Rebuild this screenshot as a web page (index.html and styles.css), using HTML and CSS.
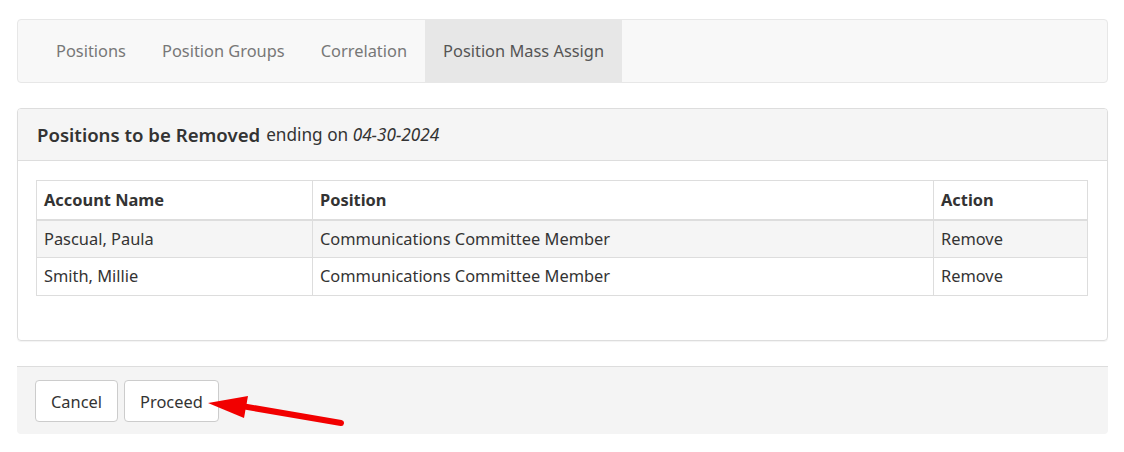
FILE: index.html
```html
<!DOCTYPE html>
<html>
<head>
<meta charset="utf-8">
<link rel="stylesheet" href="styles.css">
</head>
<body>
<div class="page">
  <nav class="navbar">
    <a class="tab">Positions</a>
    <a class="tab">Position Groups</a>
    <a class="tab">Correlation</a>
    <a class="tab active">Position Mass Assign</a>
  </nav>

  <div class="panel">
    <div class="panel-heading"><strong>Positions to be Removed</strong> <span class="sub">ending on <em>04-30-2024</em></span></div>
    <div class="panel-body">
      <table class="grid">
        <colgroup><col class="c1"><col class="c2"><col class="c3"></colgroup>
        <thead>
          <tr><th>Account Name</th><th>Position</th><th>Action</th></tr>
        </thead>
        <tbody>
          <tr class="odd"><td>Pascual, Paula</td><td>Communications Committee Member</td><td>Remove</td></tr>
          <tr><td>Smith, Millie</td><td>Communications Committee Member</td><td>Remove</td></tr>
        </tbody>
      </table>
    </div>
  </div>

  <div class="footer">
    <button class="btn">Cancel</button>
    <button class="btn">Proceed</button>
  </div>
</div>
<svg class="arrow" width="1124" height="452" viewBox="0 0 1124 452">
  <line x1="341" y1="423" x2="236" y2="405" stroke="#f20000" stroke-width="6" stroke-linecap="round"/>
  <polygon points="208,403 248,396 244,418" fill="#f20000"/>
</svg>
</body>
</html>
```

FILE: styles.css
```css
* { box-sizing: border-box; }
html, body { margin: 0; background: #fff; }
body {
  font-family: "Noto Sans", "Open Sans", sans-serif;
  font-size: 16.4px;
  color: #333;
  position: relative;
}
.page { padding: 19px 16px 0 17px; }

.navbar {
  display: flex;
  height: 64px;
  background: #f8f8f8;
  border: 1px solid #e7e7e7;
  border-radius: 4px;
  padding-left: 20px;
  margin-bottom: 25px;
}
.tab {
  display: flex;
  align-items: center;
  padding: 0 18px;
  color: #777;
  font-size: 16.4px;
  line-height: 1;
}
.tab.active { background: #e7e7e7; color: #555; }

.panel {
  border: 1px solid #ddd;
  border-radius: 4px;
  box-shadow: 0 1px 1px rgba(0,0,0,.05);
  margin-bottom: 25px;
}
.panel-heading {
  height: 52px;
  display: flex;
  align-items: center;
  padding: 0 19px;
  background: #f5f5f5;
  border-bottom: 1px solid #ddd;
  border-radius: 3px 3px 0 0;
  font-size: 18.6px;
  color: #333;
}
.panel-heading strong { font-weight: 600; margin-right: 6px; }
.panel-heading .sub { font-size: 17.2px; }
.panel-body { padding: 19px 19px 44px 18px; }

.grid {
  width: 100%;
  border-collapse: collapse;
  border: 1px solid #ddd;
}
.c1 { width: 276px; }
.c3 { width: 154px; }
.grid th, .grid td {
  border: 1px solid #ddd;
  text-align: left;
  padding: 0 7px;
  height: 38px;
  line-height: 1;
}
.grid th { font-weight: 700; border-bottom: 2px solid #ddd; height: 39px; }
.grid tr.odd td { background: #f5f5f5; }

.footer {
  background: #f4f4f4;
  border-top: 1px solid #ddd;
  border-radius: 0 0 4px 4px;
  height: 68px;
  padding: 13px 18px;
  display: flex;
  gap: 6px;
}
.btn {
  font-family: inherit;
  font-size: 16.4px;
  color: #333;
  background: #fff;
  border: 1px solid #ccc;
  border-radius: 4px;
  height: 42px;
  padding: 0 15px;
  cursor: pointer;
}
.arrow { position: absolute; left: 0; top: 0; pointer-events: none; }
```
